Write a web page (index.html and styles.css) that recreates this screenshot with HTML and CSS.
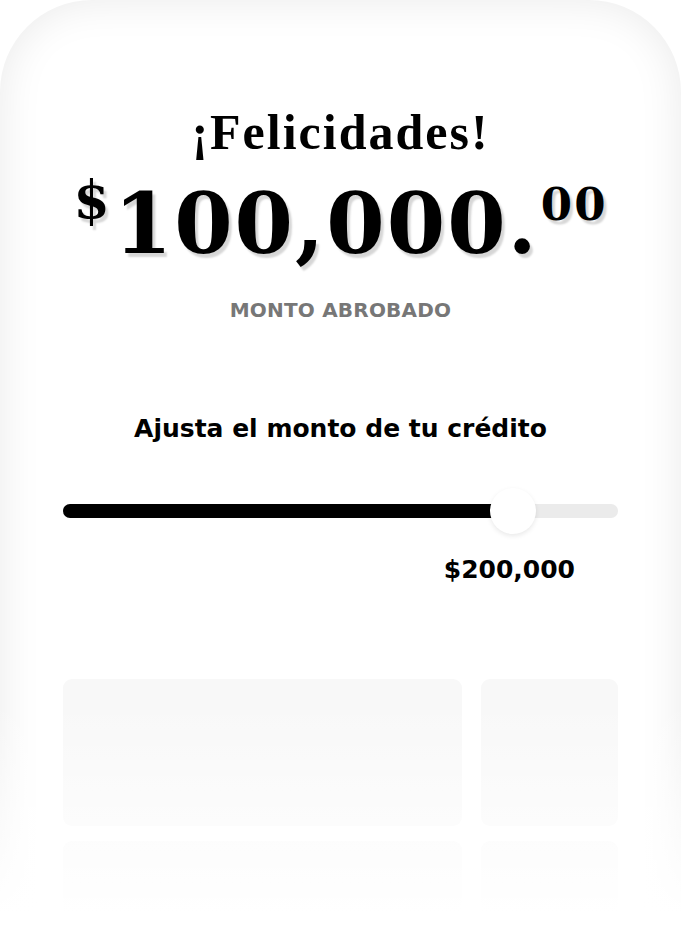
FILE: index.html
```html
<!DOCTYPE html>
<html lang="es">
<head>
<meta charset="utf-8">
<link rel="stylesheet" href="styles.css">
</head>
<body>
<div class="phone">
  <div class="content">
    <h1 class="title">¡Felicidades!</h1>
    <div class="amount"><span class="cur">$</span><span class="num">100,000.</span><span class="cents">00</span></div>
    <div class="label">MONTO ABROBADO</div>
    <h2 class="adjust">Ajusta el monto de tu crédito</h2>
    <div class="slider">
      <div class="track"><div class="fill" style="width:81%"></div><div class="thumb" style="left:81%"></div></div>
    </div>
    <div class="value-row"><span class="value">$200,000</span></div>
    <div class="cards">
      <div class="card"></div><div class="card"></div>
      <div class="card"></div><div class="card"></div>
    </div>
  </div>
  <div class="fade"></div>
</div>
</body>
</html>
```
FILE: styles.css
```css
html, body { margin: 0; padding: 0; background: #fff; }
body { width: 681px; height: 951px; overflow: hidden; }
.phone {
  position: relative;
  width: 681px;
  height: 951px;
  overflow: hidden;
  border-radius: 92px 92px 0 0;
  background: #fff;
  box-shadow: inset 0 0 44px rgba(0,0,0,0.085);
}
.content { padding: 102px 63px 0 63px; display: flex; flex-direction: column; align-items: center; }
.title {
  margin: 0;
  font-family: "Liberation Serif", serif;
  font-weight: 700;
  font-size: 50px;
  line-height: 60px;
  color: #000;
  letter-spacing: 2px;
}
.amount {
  margin-top: 14px;
  display: flex;
  align-items: flex-start;
  font-family: "DejaVu Serif", serif;
  font-weight: 700;
  color: #000;
  text-shadow: 3px 4px 2px rgba(0,0,0,0.16);
}
.cur { font-size: 52px; line-height: 52px; margin-top: -2px; margin-right: 4px; }
.num { font-size: 84px; line-height: 96px; letter-spacing: 2px; }
.cents { font-size: 45px; line-height: 45px; margin-top: 6px; margin-left: 2px; letter-spacing: 2px; }
.label {
  margin-top: 26px;
  font-family: "DejaVu Sans", sans-serif;
  font-weight: 700;
  font-size: 20px;
  color: #777;
  letter-spacing: 0.2px;
}
.adjust {
  margin: 92px 0 0 0;
  font-family: "DejaVu Sans", sans-serif;
  font-weight: 700;
  font-size: 25px;
  color: #000;
}
.slider { align-self: stretch; margin-top: 61px; }
.track { position: relative; height: 14px; border-radius: 7px; background: #ebebeb; }
.fill { height: 14px; border-radius: 7px; background: #000; }
.thumb {
  position: absolute; top: 50%;
  width: 46px; height: 46px; border-radius: 50%;
  background: #fff;
  transform: translate(-50%, -50%);
  box-shadow: 0 2px 5px rgba(0,0,0,0.09);
}
.value-row { align-self: stretch; display: flex; justify-content: flex-end; padding-right: 43px; margin-top: 37px; }
.value { font-family: "DejaVu Sans", sans-serif; font-weight: 700; font-size: 25px; color: #000; }
.cards {
  align-self: stretch;
  margin-top: 95px;
  display: grid;
  grid-template-columns: 399px 137px;
  column-gap: 19px;
  row-gap: 15px;
}
.card { height: 147px; border-radius: 9px; background: #f8f8f8; }
.fade {
  position: absolute; left: 0; right: 0; top: 700px; bottom: 0;
  background: linear-gradient(to bottom, rgba(255,255,255,0), #fff 85%);
}
```
